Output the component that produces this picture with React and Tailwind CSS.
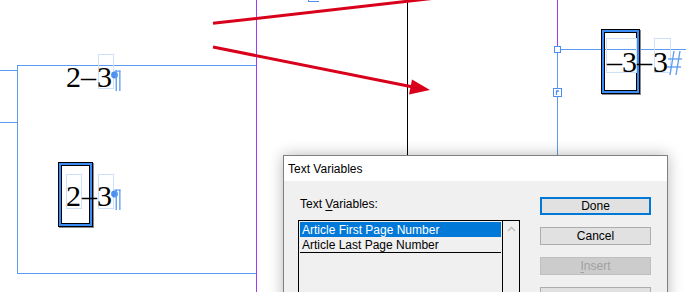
import React from 'react';

const BLUE = '#5b9bf0';

function Pilcrow({ className }) {
  return (
    <svg className={className} width="11" height="21" viewBox="0 0 11 21">
      <circle cx="3.5" cy="5" r="3.4" fill="#4d8ff0" />
      <rect x="4.6" y="0.5" width="1.3" height="20.5" fill={BLUE} />
      <rect x="8.2" y="0.5" width="1.3" height="20.5" fill={BLUE} />
      <rect x="3.5" y="0.5" width="6" height="1.2" fill={BLUE} />
    </svg>
  );
}

function HiddenHash({ className }) {
  return (
    <svg className={className} width="16" height="26" viewBox="0 0 16 26">
      <g stroke={BLUE} strokeWidth="1.3" fill="none">
        <path d="M7 1 L3 25" />
        <path d="M13 1 L9 25" />
        <path d="M1 9 H15" />
        <path d="M0 17 H14" />
      </g>
    </svg>
  );
}

// light-blue glyph box shown around a character
function CharBox({ className, children }) {
  return (
    <div className={`h-[35px] whitespace-nowrap border border-[#cfe0fb] text-[30px] leading-[30px] text-black ${className}`}>
      {children}
    </div>
  );
}

function SelBox({ className }) {
  // selected anchored frame: black / blue / black with grey drop edge
  return (
    <div className={`absolute border border-black shadow-[1px_1px_0_#8a8a8a] ${className}`}>
      <div className="h-full w-full border-2 border-[#3b8cf5]">
        <div className="h-full w-full border border-black" />
      </div>
    </div>
  );
}

function Btn({ children, variant }) {
  const cls =
    variant === 'default'
      ? 'border-2 border-[#0078d7] bg-[#e1e1e1] text-black'
      : variant === 'disabled'
      ? 'border border-[#bfbfbf] bg-[#cccccc] text-[#a0a0a0]'
      : 'border border-[#adadad] bg-[#e1e1e1] text-black';
  return (
    <div className={`flex h-[18px] w-[111px] items-center justify-center text-[12px] leading-none ${cls}`}>
      {children}
    </div>
  );
}

function TextVariablesDialog() {
  return (
    <div className="absolute left-[283px] top-[155px] w-[385px] h-[160px] border border-[#7f7f7f] bg-[#f0f0f0] shadow-[0_0_14px_rgba(0,0,0,0.28)] font-['Liberation_Sans',Arial,sans-serif]">
      <div className="flex h-[25px] items-center bg-white pl-[4px] text-[12px] text-black">Text Variables</div>
      <div className="flex pl-[14px] pt-[15px]">
        <div className="flex w-[222px] flex-col">
          <div className="ml-[2px] h-[16px] text-[12px] leading-[16px] text-black">
            Text <span className="underline underline-offset-2">V</span>ariables:
          </div>
          <div className="mt-[8px] flex h-[90px] border border-black">
            <div className="flex flex-1 flex-col p-px">
              <div className="flex h-[15px] items-center bg-[#0078d7] pl-[2px] text-[12px] text-white">
                Article First Page Number
              </div>
              <div className="flex h-[16px] items-center border-b border-black pl-[2px] text-[12px] text-black">
                Article Last Page Number
              </div>
            </div>
            <div className="flex w-[17px] justify-center border-l border-black pt-[5px]">
              <svg width="9" height="6" viewBox="0 0 9 6">
                <path d="M1 5 L4.5 1.5 L8 5" fill="none" stroke="#c2c2c2" strokeWidth="1.6" />
              </svg>
            </div>
          </div>
        </div>
        <div className="ml-[20px] mt-px flex flex-col gap-[12px]">
          <Btn variant="default">Done</Btn>
          <Btn>Cancel</Btn>
          <Btn variant="disabled">
            <span className="underline underline-offset-2">I</span>nsert
          </Btn>
          <Btn>&nbsp;</Btn>
        </div>
      </div>
    </div>
  );
}

export default function App() {
  return (
    <div className="relative h-[292px] w-[686px] overflow-hidden bg-white font-['Liberation_Serif',serif]">
      {/* left text frame and its threads */}
      <div className="absolute left-0 top-[70px] h-px w-[17px] bg-[#5b9bf0]" />
      <div className="absolute left-0 top-[122px] h-px w-[17px] bg-[#5b9bf0]" />
      <div className="absolute left-[17px] top-[65px] h-[209px] w-[240px] border border-[#5b9bf0]" />

      {/* top-left line: 2–3¶ */}
      <div className="absolute left-[66px] top-[54px] flex items-start">
        <span className="mt-[8px] text-[30px] leading-[30px] text-black">2–</span>
        <CharBox className="ml-[2px] w-[16px] pt-[7px]">
          <span className="-ml-[2px]">3</span>
        </CharBox>
        <Pilcrow className="-ml-[3px] mt-[16px]" />
      </div>

      {/* lower-left line with anchored frame */}
      <SelBox className="left-[58px] top-[162px] h-[65px] w-[35px]" />
      <div className="absolute left-[66px] top-[174px] flex items-start">
        <CharBox className="w-[16px] pt-[6px]">
          <span className="-ml-px">2</span>
        </CharBox>
        <span className="mt-[7px] text-[30px] leading-[30px] text-black">–</span>
        <CharBox className="ml-px w-[16px] pt-[6px]">
          <span className="-ml-[2px]">3</span>
        </CharBox>
        <Pilcrow className="-ml-[3px] mt-[15px]" />
      </div>

      {/* guides */}
      <div className="absolute left-[256px] top-0 h-full w-px bg-[#a03af5]" />
      <div className="absolute left-[407px] top-0 h-[156px] w-px bg-black" />
      <div className="absolute left-[308px] top-0 h-[2px] w-[11px] border-b border-l border-[#4d8ff0]" />

      {/* right frame edges and handles */}
      <div className="absolute left-[557px] top-0 h-[47px] w-px bg-[#a03af5]" />
      <div className="absolute left-[557px] top-[47px] h-[245px] w-px bg-[#5b9bf0]" />
      <div className="absolute left-[560px] top-[49px] h-px w-[126px] bg-[#5b9bf0]" />
      <div className="absolute left-[554px] top-[46px] h-[7px] w-[7px] border border-[#4d8ff0] bg-white" />
      <svg className="absolute left-[553px] top-[88px]" width="9" height="9" viewBox="0 0 9 9">
        <rect x="0.5" y="0.5" width="8" height="8" fill="white" stroke="#4d8ff0" />
        <path d="M3.5 7 V3 H6" fill="none" stroke="#4d8ff0" strokeWidth="1.3" />
      </svg>

      {/* right line: –3–3# */}
      <SelBox className="left-[601px] top-[29px] h-[65px] w-[39px]" />
      <div className="absolute left-[606px] top-[38px] flex items-start">
        <CharBox className="w-[31px] pt-[8px]">–3</CharBox>
        <span className="mt-[9px] text-[30px] leading-[30px] text-black">–</span>
        <CharBox className="ml-[2px] w-[17px] pt-[8px]">
          <span className="-ml-[2px]">3</span>
        </CharBox>
        <HiddenHash className="-ml-[4px] mt-[12px]" />
      </div>

      {/* red callout arrows */}
      <svg className="pointer-events-none absolute left-0 top-0" width="686" height="292" viewBox="0 0 686 292">
        <g stroke="#d9001b" strokeWidth="3" strokeLinecap="butt">
          <line x1="213" y1="23.3" x2="445" y2="-3" />
          <line x1="213" y1="47" x2="413" y2="87" />
        </g>
        <polygon points="430,90 412,79.5 409,94.5" fill="#d9001b" />
      </svg>

      <TextVariablesDialog />
    </div>
  );
}
